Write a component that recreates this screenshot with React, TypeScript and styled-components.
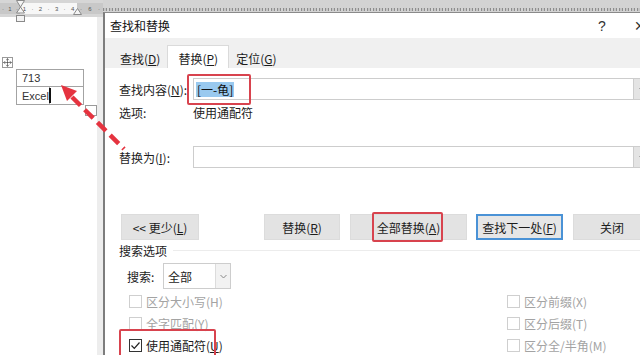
import React from 'react';
import styled, { createGlobalStyle } from 'styled-components';
import { Move } from 'lucide-react';

const GlobalStyle = createGlobalStyle`
  html, body { margin: 0; padding: 0; background: #ffffff; }
  #root { width: 640px; height: 355px; overflow: hidden; }
  * { box-sizing: border-box; }
`;

const Screen = styled.div`
  position: relative;
  width: 640px;
  height: 355px;
  overflow: hidden;
  display: flex;
  background: #ffffff;
  font-family: "Noto Sans CJK SC", "Noto Sans", sans-serif;
  color: #1c1c1c;
`;

/* ---------- document side ---------- */
const DocColumn = styled.div`
  width: 103px;
  flex: none;
  display: flex;
  flex-direction: column;
`;

const LeftRuler = styled.div`
  position: relative;
  height: 17px;
  flex: none;
  background: #d6d6d6;
  padding-top: 3px;
`;

const RulerTrack = styled.div`
  height: 11px;
  display: flex;
  font-family: "Liberation Sans", sans-serif;
  font-size: 6px;
  color: #555;
`;

const RulerSeg = styled.div<{ $w: number; $light?: boolean }>`
  width: ${p => p.$w}px;
  flex: none;
  background: ${p => (p.$light ? '#f7f7f7' : '#c8c8c8')};
  display: flex;
  align-items: center;
  justify-content: space-around;
`;

const RulerMarker = styled.svg<{ $x: number }>`
  position: absolute;
  top: 0;
  left: ${p => p.$x}px;
`;

const Page = styled.div`
  flex: 1;
  background: #ffffff;
  border-right: 6px solid #ededed;
  padding: 40px 0 0 2px;
  display: flex;
  flex-direction: column;
`;

const MoveHandle = styled.div`
  width: 11px;
  height: 11px;
  border: 1px solid #9a9a9a;
  background: #fff;
  display: flex;
  align-items: center;
  justify-content: center;
  color: #333;
`;

const TableWrap = styled.div`
  margin: 1px 0 0 14px;
  display: flex;
  align-items: flex-end;
`;

const DocTable = styled.div`
  width: 70px;
  border: 1px solid #a3a3a3;
  display: grid;
  grid-template-columns: 32px 1fr;
  font-family: "Liberation Sans", sans-serif;
  font-size: 11px;
  color: #333;
`;

const Cell = styled.div<{ $span?: boolean; $right?: boolean; $top?: boolean }>`
  height: 17px;
  grid-column: ${p => (p.$span ? 'span 2' : 'auto')};
  border-left: ${p => (p.$right ? '1px solid #a3a3a3' : 'none')};
  border-bottom: ${p => (p.$top ? '1px solid #a3a3a3' : 'none')};
  padding-left: ${p => (p.$right ? 0 : 5)}px;
  display: flex;
  align-items: center;
`;

const Caret = styled.span`
  width: 2px;
  height: 15px;
  background: #111;
  margin-left: -1px;
`;

const ResizeHandle = styled.div`
  width: 12px;
  height: 11px;
  border: 1px solid #9a9a9a;
  margin: 0 0 -11px 1px;
`;

/* ---------- dialog side ---------- */
const DialogColumn = styled.div`
  flex: 1;
  display: flex;
  flex-direction: column;
  min-width: 0;
`;

const TopRuler = styled.div`
  height: 12px;
  flex: none;
  background: #d3d3d3;
  padding-top: 8px;
`;

const TickStrip = styled.div`
  height: 3px;
  background: repeating-linear-gradient(90deg, #8d8d8d 0 1px, #c4c4c4 1px 3px, #8d8d8d 3px 4px, #d3d3d3 4px 6px);
`;

const Dialog = styled.div`
  width: 560px;
  flex: 1;
  border-left: 2px solid #7d7d7d;
  border-top: 1px solid #8a8a8a;
  background: #ffffff;
  display: flex;
  flex-direction: column;
`;

const TitleBar = styled.div`
  height: 25px;
  flex: none;
  display: flex;
  align-items: center;
  padding-left: 5px;
  font-size: 12px;
  color: #111;
`;

const TitleText = styled.div`
  flex: 1;
`;

const TitleButton = styled.div<{ $w: number }>`
  width: ${p => p.$w}px;
  height: 25px;
  display: flex;
  align-items: center;
  justify-content: center;
  font-family: "Liberation Sans", sans-serif;
  font-size: 14px;
  color: #333;
`;

const TabStrip = styled.div`
  height: 30px;
  flex: none;
  background: #f0f0f0;
  display: flex;
  align-items: flex-end;
  padding-left: 6px;
`;

const Tab = styled.div<{ $active?: boolean }>`
  height: ${p => (p.$active ? 23 : 20)}px;
  padding: ${p => (p.$active ? '2px 10px 0' : '0 8px')};
  margin: ${p => (p.$active ? '0 -2px' : '0')};
  background: ${p => (p.$active ? '#ffffff' : 'transparent')};
  border: ${p => (p.$active ? '1px solid #dadada' : '1px solid transparent')};
  border-bottom: none;
  display: flex;
  align-items: center;
  font-size: 12px;
  color: #1c1c1c;
  position: relative;
  z-index: ${p => (p.$active ? 1 : 0)};
`;

const Panel = styled.div`
  flex: 1;
  background: #ffffff;
  padding: 10px 12px 0 14px;
  display: flex;
  flex-direction: column;
`;

const FieldRow = styled.div<{ $mt?: number }>`
  height: 22px;
  margin-top: ${p => p.$mt ?? 0}px;
  display: flex;
  align-items: center;
  font-size: 12px;
`;

const InfoRow = styled.div`
  height: 24px;
  display: flex;
  align-items: center;
  font-size: 12px;
`;

const FieldLabel = styled.div`
  width: 74px;
  flex: none;
`;

const Combo = styled.div`
  flex: 1;
  height: 22px;
  border: 1px solid #cdcdcd;
  display: flex;
`;

const ComboText = styled.div`
  flex: 1;
  padding-left: 2px;
  display: flex;
  align-items: center;
`;

const ComboArrow = styled.div`
  width: 17px;
  flex: none;
  background: #e4e4e4;
  border-left: 1px solid #cdcdcd;
  display: flex;
  align-items: center;
  justify-content: center;
  color: #777;
`;

const Marked = styled.span`
  position: relative;
  display: inline-flex;
`;

const Selection = styled.span`
  background: #99c9ef;
  line-height: 15px;
  padding: 0 1px;
  font-size: 12px;
  color: #111;
`;

const RedBox = styled.span<{ $inset: string }>`
  position: absolute;
  inset: ${p => p.$inset};
  border: 2px solid #d8434e;
  border-radius: 2px;
  pointer-events: none;
`;

const ButtonRow = styled.div`
  margin-top: 46px;
  padding-left: 2px;
  height: 26px;
  display: flex;
`;

const Button = styled.div<{ $w: number; $ml?: number; $default?: boolean }>`
  width: ${p => p.$w}px;
  flex: none;
  margin-left: ${p => p.$ml ?? 10}px;
  height: 26px;
  background: ${p => (p.$default ? '#e6e6e6' : '#e3e3e3')};
  border: ${p => (p.$default ? '2px solid #4a92d6' : '1px solid #dcdcdc')};
  display: flex;
  align-items: center;
  justify-content: center;
  font-size: 12px;
  color: #1c1c1c;
  position: relative;
`;

const SectionTitle = styled.div`
  height: 20px;
  display: flex;
  align-items: center;
  font-size: 12px;
  &::after {
    content: '';
    flex: 1;
    height: 1px;
    margin-left: 6px;
    background: #ececec;
  }
`;

const SearchRow = styled.div`
  margin-top: 3px;
  padding-left: 8px;
  height: 26px;
  display: flex;
  align-items: center;
  font-size: 12px;
`;

const SearchLabel = styled.div`
  width: 36px;
  flex: none;
`;

const Select = styled.div`
  width: 68px;
  height: 26px;
  border: 1px solid #cdcdcd;
  display: flex;
`;

const SelectValue = styled.div`
  flex: 1;
  padding-left: 4px;
  display: flex;
  align-items: center;
`;

const SelectArrow = styled.div`
  width: 15px;
  background: #f2f2f2;
  border-left: 1px solid #dcdcdc;
  display: flex;
  align-items: center;
  justify-content: center;
  color: #888;
`;

const OptionsGrid = styled.div`
  margin-top: 1px;
  display: grid;
  grid-template-columns: 388px 1fr;
  grid-auto-rows: 22px;
`;

const CheckRow = styled.div<{ $indent?: number }>`
  position: relative;
  padding-left: ${p => p.$indent ?? 0}px;
  display: flex;
  align-items: center;
  gap: 4px;
  font-size: 12px;
`;

const Box = styled.span<{ $on?: boolean }>`
  width: 13px;
  height: 13px;
  flex: none;
  border: 1px solid ${p => (p.$on ? '#333333' : '#cfcfcf')};
  background: #fff;
  display: flex;
  align-items: center;
  justify-content: center;
`;

const CheckLabel = styled.span<{ $off?: boolean }>`
  color: ${p => (p.$off ? '#a3a3a3' : '#1c1c1c')};
  white-space: nowrap;
`;

const Overlay = styled.svg`
  position: absolute;
  left: 0;
  top: 0;
  pointer-events: none;
  z-index: 10;
`;

const Chevron = () => (
  <svg width="7" height="5" viewBox="0 0 7 5">
    <path d="M0.5 1 L3.5 4 L6.5 1" fill="none" stroke="currentColor" strokeWidth="1" />
  </svg>
);

const Tick = () => (
  <svg width="11" height="11" viewBox="0 0 11 11">
    <path d="M1.5 5.5 L4.3 8.3 L9.5 2.5" fill="none" stroke="#222" strokeWidth="1.2" />
  </svg>
);

const Option = ({ label, on, off, indent }: { label: React.ReactNode; on?: boolean; off?: boolean; indent?: number }) => (
  <CheckRow $indent={indent}>
    <Box $on={on}>{on && <Tick />}</Box>
    <CheckLabel $off={off}>{label}</CheckLabel>
  </CheckRow>
);

export default function App() {
  return (
    <>
      <GlobalStyle />
      <Screen>
        <DocColumn>
          <LeftRuler>
            <RulerTrack>
              <RulerSeg $w={20}>
                <span>·</span>
                <span>1</span>
                <span>·</span>
              </RulerSeg>
              <RulerSeg $w={57} $light>
                <span>1</span>
                <span>·</span>
                <span>2</span>
                <span>·</span>
                <span>3</span>
                <span>·</span>
                <span>4</span>
              </RulerSeg>
              <RulerSeg $w={26}>
                <span>·</span>
                <span>6</span>
                <span>·</span>
              </RulerSeg>
            </RulerTrack>
            <RulerMarker $x={16} width="9" height="24" viewBox="0 0 9 24">
              <path d="M0.5 0.5 H8.5 L4.5 7 L8.5 13 H0.5 L4.5 7 Z" fill="#f4f4f4" stroke="#8a8a8a" />
              <rect x="0.5" y="15.5" width="8" height="6" fill="#f4f4f4" stroke="#8a8a8a" />
            </RulerMarker>
            <RulerMarker $x={73} width="9" height="17" viewBox="0 0 9 17">
              <path d="M0.5 14.5 L4.5 8.5 L8.5 14.5 Z" fill="#f4f4f4" stroke="#8a8a8a" />
            </RulerMarker>
          </LeftRuler>
          <Page>
            <MoveHandle>
              <Move size={9} strokeWidth={1.6} />
            </MoveHandle>
            <TableWrap>
              <DocTable>
                <Cell $span $top>713</Cell>
                <Cell>Excel</Cell>
                <Cell $right>
                  <Caret />
                </Cell>
              </DocTable>
              <ResizeHandle />
            </TableWrap>
          </Page>
        </DocColumn>

        <DialogColumn>
          <TopRuler>
            <TickStrip />
          </TopRuler>
          <Dialog>
            <TitleBar>
              <TitleText>查找和替换</TitleText>
              <TitleButton $w={30}>?</TitleButton>
              <TitleButton $w={46}>✕</TitleButton>
            </TitleBar>
            <TabStrip>
              <Tab>查找(<u>D</u>)</Tab>
              <Tab $active>替换(<u>P</u>)</Tab>
              <Tab>定位(<u>G</u>)</Tab>
            </TabStrip>
            <Panel>
              <FieldRow>
                <FieldLabel>查找内容(<u>N</u>):</FieldLabel>
                <Combo>
                  <ComboText>
                    <Marked>
                      <Selection>[一-龟]</Selection>
                      <RedBox $inset="-8px -17px -8px -9px" />
                    </Marked>
                  </ComboText>
                  <ComboArrow>
                    <Chevron />
                  </ComboArrow>
                </Combo>
              </FieldRow>
              <InfoRow>
                <FieldLabel>选项:</FieldLabel>
                <span>使用通配符</span>
              </InfoRow>
              <FieldRow $mt={22}>
                <FieldLabel>替换为(<u>I</u>):</FieldLabel>
                <Combo>
                  <ComboText />
                  <ComboArrow>
                    <Chevron />
                  </ComboArrow>
                </Combo>
              </FieldRow>
              <ButtonRow>
                <Button $w={78} $ml={0}>&lt;&lt; 更少(<u>L</u>)</Button>
                <Button $w={76} $ml={65}>替换(<u>R</u>)</Button>
                <Button $w={117}>
                  <Marked>
                    全部替换(<u>A</u>)
                    <RedBox $inset="-7px -3px -6px -5px" />
                  </Marked>
                </Button>
                <Button $w={87} $ml={9} $default>查找下一处(<u>F</u>)</Button>
                <Button $w={78}>关闭</Button>
              </ButtonRow>
              <SectionTitle>搜索选项</SectionTitle>
              <SearchRow>
                <SearchLabel>搜索:</SearchLabel>
                <Select>
                  <SelectValue>全部</SelectValue>
                  <SelectArrow>
                    <Chevron />
                  </SelectArrow>
                </Select>
              </SearchRow>
              <OptionsGrid>
                <Option indent={10} off label="区分大小写(H)" />
                <Option off label="区分前缀(X)" />
                <Option indent={10} off label="全字匹配(Y)" />
                <Option off label="区分后缀(T)" />
                <CheckRow $indent={10}>
                  <Box $on>
                    <Tick />
                  </Box>
                  <CheckLabel>使用通配符(<u>U</u>)</CheckLabel>
                  <RedBox $inset="-5px auto -6px 0px" style={{ width: 97 }} />
                </CheckRow>
                <Option off label="区分全/半角(M)" />
              </OptionsGrid>
            </Panel>
          </Dialog>
        </DialogColumn>

        <Overlay width="640" height="355" viewBox="0 0 640 355">
          <line x1="72" y1="97" x2="124" y2="149" stroke="#e5333f" strokeWidth="4.5" strokeDasharray="12 6" />
          <polygon points="61,85 77,91 67,101" fill="#e5333f" />
        </Overlay>
      </Screen>
    </>
  );
}
